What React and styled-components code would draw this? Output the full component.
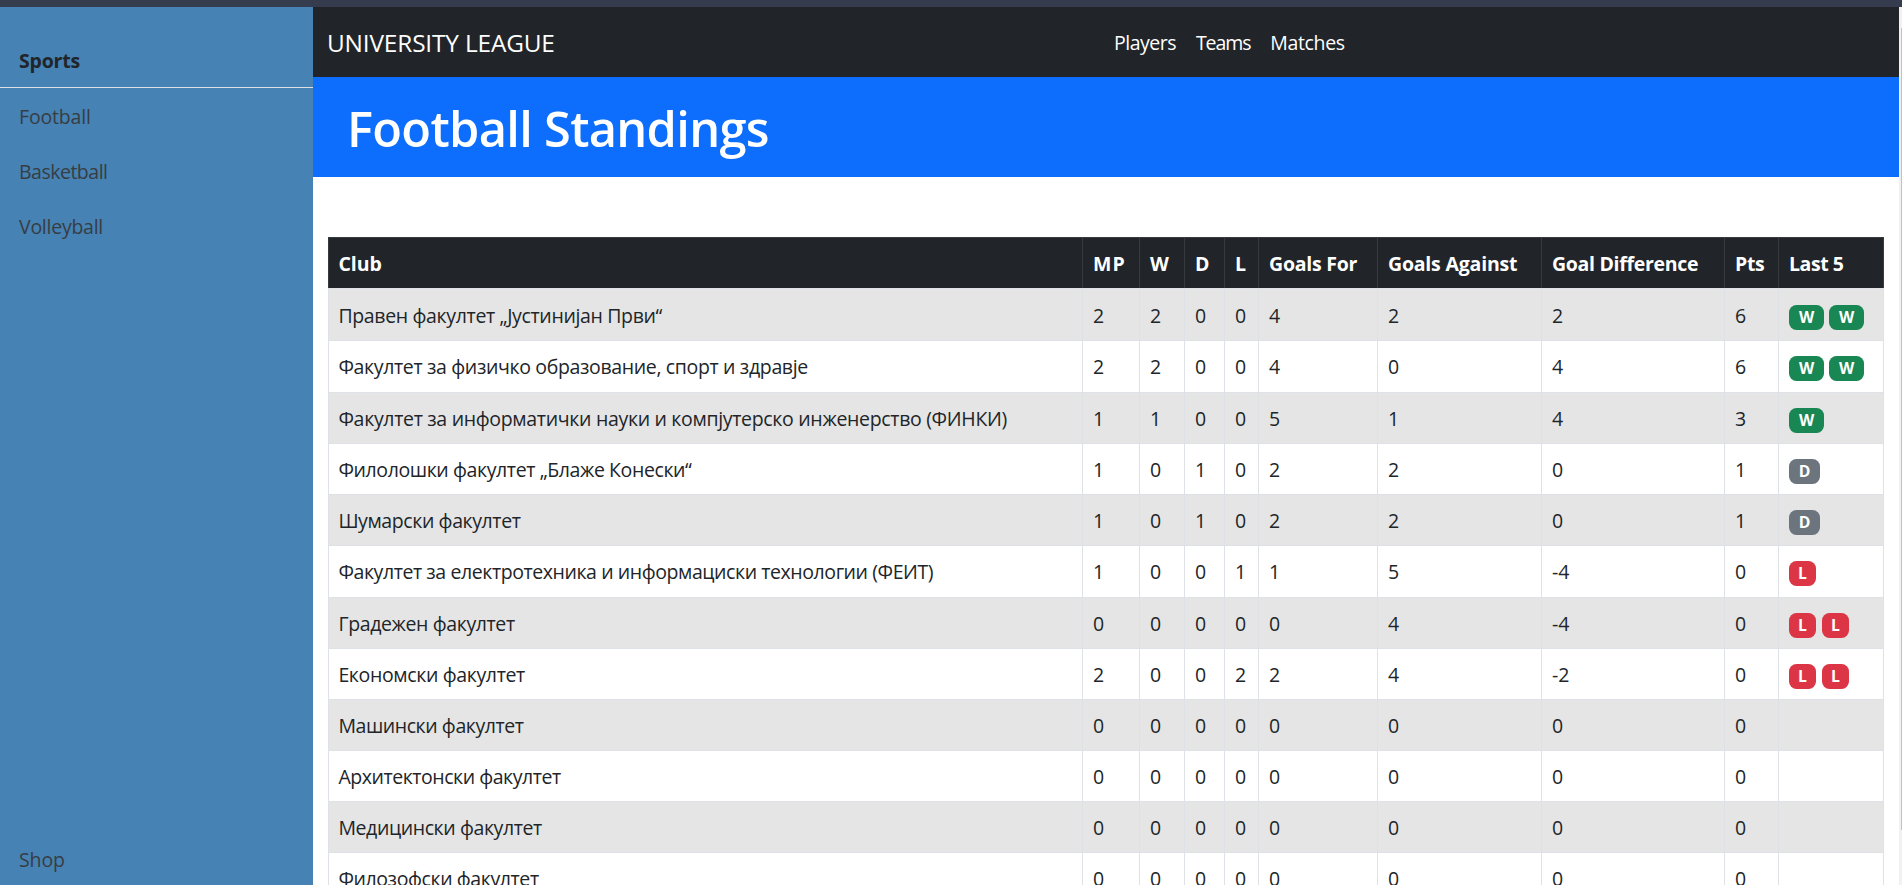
import React from "react";
import styled, { createGlobalStyle } from "styled-components";

const GlobalStyle = createGlobalStyle`
  * { box-sizing: border-box; }
  body {
    margin: 0;
    overflow: hidden;
    background: #fff;
    color: #212529;
    font-family: "Open Sans", "Noto Sans", sans-serif;
    font-size: 19.5px;
    line-height: 30px;
  }
`;

const Page = styled.div`
  display: flex;
  flex-direction: column;
  height: 885px;
  overflow: hidden;
`;

const TopStrip = styled.div`
  flex: 0 0 7px;
  background: #343c4e;
`;

const Body = styled.div`
  flex: 1;
  min-height: 0;
  display: flex;
`;

const Sidebar = styled.aside`
  flex: 0 0 313px;
  display: flex;
  flex-direction: column;
  background: #4682b4;
`;

const SidebarTitle = styled.div`
  padding: 39px 19px 11px;
  margin-bottom: 1px;
  border-bottom: 1px solid #dee2e6;
  font-weight: 700;
  letter-spacing: -0.21px;
`;

const SidebarLink = styled.a`
  padding: 0 19px;
  line-height: ${(p) => (p.$bottom ? 51 : 55)}px;
  margin-top: ${(p) => (p.$bottom ? "auto" : 0)};
  color: #363d43;
  letter-spacing: ${(p) => p.$tracking}px;
`;

const Main = styled.main`
  flex: 1;
  min-width: 0;
  overflow: hidden;
`;

const Navbar = styled.nav`
  display: flex;
  align-items: center;
  height: 70px;
  padding: 2px 0 0 14px;
  background: #212529;
  color: #fff;
`;

const Brand = styled.span`
  flex: 0 0 787px;
  font-size: 24.4px;
  letter-spacing: -0.16px;
`;

const NavLinks = styled.div`
  display: flex;
  gap: 20px;
`;

const NavLink = styled.a`
  letter-spacing: ${(p) => p.$tracking}px;
`;

const Banner = styled.header`
  height: 100px;
  padding: 1px 34px 0;
  background: #0d6efd;
`;

const Title = styled.h1`
  margin: 0;
  color: #fff;
  font-size: 48.75px;
  font-weight: 600;
  line-height: 100px;
  letter-spacing: -0.69px;
`;

const Table = styled.table`
  width: 1556px;
  margin: 60px 0 0 15px;
  table-layout: fixed;
  border-spacing: 0;
`;

const Column = styled.col`
  width: ${(p) => p.$width}px;
`;

const HeadCell = styled.th`
  height: 51px;
  padding: 11px 0 0 10px;
  border: 0 solid #373b3e;
  border-width: 1px 0 0 1px;
  background: #212529;
  color: #fff;
  font-weight: 700;
  text-align: left;
  vertical-align: top;
  white-space: nowrap;
  letter-spacing: ${(p) => p.$tracking}px;
  &:first-child { padding-left: 9.4px; }
  &:last-child { border-right-width: 1px; }
`;

const Cell = styled.td`
  padding: 11px 0 0 10px;
  border: 0 solid #dee2e6;
  border-width: 1px 0 0 1px;
  vertical-align: top;
  white-space: nowrap;
  letter-spacing: ${(p) => p.$tracking || 0}px;
  &:first-child { padding-left: 9.4px; }
  &:last-child { border-right-width: 1px; }
`;

const Row = styled.tr`
  height: 51px;
  &:nth-child(1), &:nth-child(2), &:nth-child(6) { height: 52px; }
  &:nth-child(odd) { background: #e5e5e5; }
  &:nth-child(1) ${Cell} { padding-top: 12px; }
`;

const Form = styled.div`
  display: flex;
  gap: ${(p) => p.$gap}px;
  padding-top: 4px;
`;

const badgeLook = {
  W: { color: "#198754", width: 35 },
  D: { color: "#6c757d", width: 31 },
  L: { color: "#dc3545", width: 27 },
};

const Badge = styled.span`
  width: ${(p) => badgeLook[p.$result].width}px;
  height: 25px;
  border-radius: 7.5px;
  background: ${(p) => badgeLook[p.$result].color};
  color: #fff;
  font-size: 15.75px;
  font-weight: 700;
  line-height: 25px;
  text-align: center;
`;

const columns = [
  ["Club", 754, -0.06],
  ["MP", 57, 1.2],
  ["W", 45, 0],
  ["D", 40, 0],
  ["L", 34, 0],
  ["Goals For", 119, -0.24],
  ["Goals Against", 164, -0.2],
  ["Goal Difference", 183, -0.3],
  ["Pts", 54, -0.35],
  ["Last 5", 106, -0.45],
];

const clubs = [
  ["Правен факултет „Јустинијан Први“", -0.343, [2, 2, 0, 0, 4, 2, 2, 6], "WW"],
  ["Факултет за физичко образование, спорт и здравје", -0.35, [2, 2, 0, 0, 4, 0, 4, 6], "WW"],
  ["Факултет за информатички науки и компјутерско инженерство (ФИНКИ)", -0.32, [1, 1, 0, 0, 5, 1, 4, 3], "W"],
  ["Филолошки факултет „Блаже Конески“", -0.395, [1, 0, 1, 0, 2, 2, 0, 1], "D"],
  ["Шумарски факултет", -0.403, [1, 0, 1, 0, 2, 2, 0, 1], "D"],
  ["Факултет за електротехника и информациски технологии (ФЕИТ)", -0.42, [1, 0, 0, 1, 1, 5, -4, 0], "L"],
  ["Градежен факултет", -0.385, [0, 0, 0, 0, 0, 4, -4, 0], "LL"],
  ["Економски факултет", -0.36, [2, 0, 0, 2, 2, 4, -2, 0], "LL"],
  ["Машински факултет", -0.43, [0, 0, 0, 0, 0, 0, 0, 0], ""],
  ["Архитектонски факултет", -0.457, [0, 0, 0, 0, 0, 0, 0, 0], ""],
  ["Медицински факултет", -0.4, [0, 0, 0, 0, 0, 0, 0, 0], ""],
  ["Филозофски факултет", -0.4, [0, 0, 0, 0, 0, 0, 0, 0], ""],
];

const ScrollTrack = styled.div`
  flex: 0 0 3px;
  padding: 21px 0 0 2px;
  background: #f1f1f1;
`;

const ScrollThumb = styled.div`
  height: 802px;
  background: #c1c1c1;
`;

export default function App() {
  return (
    <Page>
      <GlobalStyle />
      <TopStrip />
      <Body>
        <Sidebar>
          <SidebarTitle>Sports</SidebarTitle>
          <SidebarLink $tracking={-0.17}>Football</SidebarLink>
          <SidebarLink $tracking={-0.5}>Basketball</SidebarLink>
          <SidebarLink $tracking={-0.25}>Volleyball</SidebarLink>
          <SidebarLink $bottom $tracking={-0.13}>Shop</SidebarLink>
        </Sidebar>
        <Main>
          <Navbar>
            <Brand>UNIVERSITY LEAGUE</Brand>
            <NavLinks>
              <NavLink $tracking={-0.5}>Players</NavLink>
              <NavLink $tracking={-1.1}>Teams</NavLink>
              <NavLink $tracking={-0.36}>Matches</NavLink>
            </NavLinks>
          </Navbar>
          <Banner>
            <Title>Football Standings</Title>
          </Banner>
          <Table>
            <colgroup>
              {columns.map(([label, width]) => (
                <Column key={label} $width={width} />
              ))}
            </colgroup>
            <thead>
              <tr>
                {columns.map(([label, , tracking]) => (
                  <HeadCell key={label} $tracking={tracking}>{label}</HeadCell>
                ))}
              </tr>
            </thead>
            <tbody>
              {clubs.map(([name, tracking, stats, form]) => (
                <Row key={name}>
                  <Cell $tracking={tracking}>{name}</Cell>
                  {stats.map((value, i) => (
                    <Cell key={i}>{value}</Cell>
                  ))}
                  <Cell>
                    <Form $gap={form === "LL" ? 6 : 5}>
                      {form.split("").map((result, i) => (
                        <Badge key={i} $result={result}>{result}</Badge>
                      ))}
                    </Form>
                  </Cell>
                </Row>
              ))}
            </tbody>
          </Table>
        </Main>
        <ScrollTrack>
          <ScrollThumb />
        </ScrollTrack>
      </Body>
    </Page>
  );
}
